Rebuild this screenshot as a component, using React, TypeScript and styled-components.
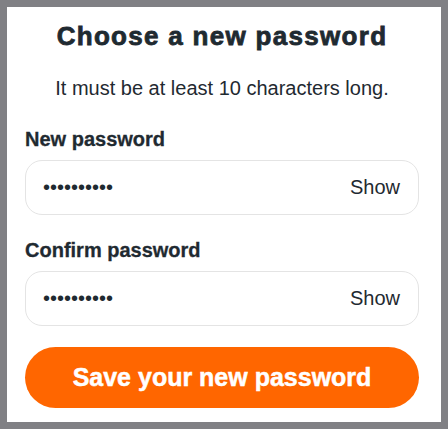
import React from "react";
import styled, { createGlobalStyle } from "styled-components";

const Global = createGlobalStyle`
  html, body { margin: 0; padding: 0; background: #ffffff; }
  body { font-family: "Liberation Sans", Arial, sans-serif; color: #1f2a31; }
`;

const Frame = styled.div`
  box-sizing: border-box;
  width: 448px;
  height: 429px;
  border: 7px solid #808084;
  padding: 15px 22px 0 18px;
  display: flex;
  flex-direction: column;
`;

const Title = styled.h1`
  margin: 0;
  font-size: 26px;
  line-height: 29px;
  font-weight: 700;
  letter-spacing: 1.3px;
  text-align: center;
  color: #1f2a31;
  -webkit-text-stroke: 0.8px #1f2a31;
`;

const Subtitle = styled.p`
  margin: 26px 0 0;
  font-size: 20px;
  line-height: 23px;
  text-align: center;
  color: #1f2a31;
`;

const Form = styled.form`
  margin-top: 28px;
  display: flex;
  flex-direction: column;
`;

const Field = styled.div<{ $first?: boolean }>`
  display: flex;
  flex-direction: column;
  gap: 9px;
  margin-top: ${(p) => (p.$first ? "0" : "24px")};
`;

const Label = styled.label`
  font-size: 20px;
  line-height: 23px;
  font-weight: 700;
  color: #1f2a31;
  -webkit-text-stroke: 0.3px #1f2a31;
`;

const InputBox = styled.div`
  box-sizing: border-box;
  height: 55px;
  border: 1px solid #e4e4e4;
  border-radius: 17px;
  display: flex;
  align-items: center;
  padding: 0 18px 0 17px;
  background: #fff;
`;

const Input = styled.input`
  flex: 1;
  min-width: 0;
  border: none;
  outline: none;
  background: transparent;
  font-family: "Liberation Sans", Arial, sans-serif;
  font-size: 20px;
  color: #1f2a31;
  padding: 0;
`;

const ShowButton = styled.button`
  border: none;
  background: transparent;
  padding: 0;
  font-family: "Liberation Sans", Arial, sans-serif;
  font-size: 20px;
  color: #1f2a31;
  cursor: pointer;
`;

const Submit = styled.button`
  margin-top: 21px;
  height: 61px;
  border: none;
  border-radius: 31px;
  background: #ff6600;
  color: #ffffff;
  font-family: "Liberation Sans", Arial, sans-serif;
  font-size: 25px;
  font-weight: 700;
  -webkit-text-stroke: 0.5px #ffffff;
  cursor: pointer;
`;

function PasswordField({ label, first }: { label: string; first?: boolean }) {
  return (
    <Field $first={first}>
      <Label>{label}</Label>
      <InputBox>
        <Input type="password" defaultValue="abcdefghij" readOnly />
        <ShowButton type="button">Show</ShowButton>
      </InputBox>
    </Field>
  );
}

export default function App() {
  return (
    <>
      <Global />
      <Frame>
        <Title>Choose a new password</Title>
        <Subtitle>It must be at least 10 characters long.</Subtitle>
        <Form onSubmit={(e) => e.preventDefault()}>
          <PasswordField label="New password" first />
          <PasswordField label="Confirm password" />
          <Submit type="submit">Save your new password</Submit>
        </Form>
      </Frame>
    </>
  );
}
